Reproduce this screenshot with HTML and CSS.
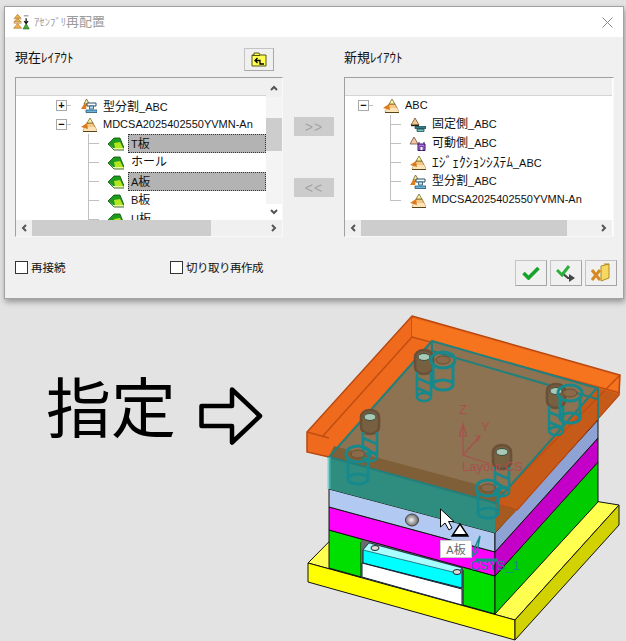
FILE: index.html
```html
<!DOCTYPE html>
<html lang="ja">
<head>
    <meta charset="UTF-8">
    <meta name="viewport" content="width=device-width, initial-scale=1.0">
    <title>アセンブリ再配置</title>
    <link rel="stylesheet" href="styles.css">
</head>
<body>
    <svg class="sprites" width="0" height="0">
        <symbol id="i-asm" viewBox="0 0 16 14">
            <path d="M6 5h6l4 8H2z" fill="#f8c880" stroke="#7a5a20" stroke-width=".7"/>
            <path d="M4 9h10l2 4H2z" fill="#fce4b8"/>
            <path d="M9 0 12 5H6z" fill="#f8f0a0" stroke="#6a5a20" stroke-width=".7"/>
            <path d="M0 9 6 5l1 6z" fill="#dd7a1a"/>
            <path d="M2 13.500h14" stroke="#5a4418"/>
        </symbol>
        <symbol id="i-part" viewBox="0 0 16 14">
            <path d="M0 7 6 1h6l4 10H5z" fill="#1e9a1e"/>
            <path d="M6 6l6-1 3 6H7z" fill="#b4e61e"/>
            <path d="M5 11h10l1 2H6z" fill="#f0f8a0"/>
            <path d="M0 7 6 1h6l4 10 .5 2H6z" fill="none" stroke="#0d4f0d" stroke-width=".8"/>
        </symbol>
        <symbol id="i-split" viewBox="0 0 16 14">
            <path d="M5.500 0 8.500 5H3z" fill="#f8ec98" stroke="#5a4a20" stroke-width=".7"/>
            <path d="M0 10 3 5h3l-1 5z" fill="#e07c1c"/>
            <path d="M6 4h9v3H6z" fill="#fff" stroke="#26506a"/>
            <path d="M8.500 7h4v3h-4z" fill="#bfe4f4" stroke="#26506a" stroke-width=".8"/>
            <path d="M5 11h11v2.500H5z" fill="#6ab8e0" stroke="#26506a" stroke-width=".8"/>
        </symbol>
        <symbol id="i-fixed" viewBox="0 0 16 14">
            <path d="M5 0 9 7H1z" fill="#f4c888" stroke="#5a3a20" stroke-width=".7"/>
            <path d="M1 7.500h8" stroke="#20201a" stroke-width="1.400"/>
            <path d="M5 8.500h11v2H5z" fill="#2f7f86" stroke="#123c40" stroke-width=".7"/>
            <path d="M7 11h7v2.500H7z" fill="#6ac2c8" stroke="#123c40" stroke-width=".7"/>
        </symbol>
        <symbol id="i-moving" viewBox="0 0 16 14">
            <path d="M4 0 8 7H0z" fill="#f4c8a8" stroke="#5a3a20" stroke-width=".7"/>
            <path d="M8 7h7v6.500H8z" fill="#b070e0" stroke="#34106a"/>
            <path d="M10 9.500h3v4h-3z" fill="#fff" stroke="#34106a" stroke-width=".7"/>
            <path d="M9 5v2M14 5v2" stroke="#34106a"/>
        </symbol>
    </svg>

    <section class="dialog">
        <header class="title-bar">
            <svg class="title-icon" width="17" height="16" viewBox="0 0 22 20">
                <path d="M6 0 10 5H2zM6 6l5 4H1z" fill="#f4b850" stroke="#a06a10" stroke-width=".8"/>
                <path d="M1 6h10M1 11.500h10" stroke="#c08030"/>
                <path d="M6 12l5 6H1z" fill="#f4b850" stroke="#a06a10" stroke-width=".8"/>
                <path d="M17 12 21 19H13z" fill="#4aa83a" stroke="#1c6a1c" stroke-width=".8"/>
                <path d="M17 5v7M14.500 9 17 12l2.500-3" fill="none" stroke="#111" stroke-width="1.600"/>
                <path d="M14 2h6" stroke="#888" stroke-width="1.400"/>
            </svg>
            <span class="title-text"><span class="title-kana">ｱｾﾝﾌﾞﾘ</span>再配置</span>
            <svg class="close-icon" width="11" height="11" viewBox="0 0 11 11">
                <path d="M.5.5l10 10M10.500.5l-10 10" stroke="#8a8a8a"/>
            </svg>
        </header>

        <div class="dialog-body">
            <div class="columns">
                <div class="column column-left">
                    <div class="column-head">
                        <span class="column-title">現在ﾚｲｱｳﾄ</span>
                        <button class="folder-btn" type="button">
                            <svg width="16" height="15" viewBox="0 0 16 15">
                                <path d="M3 1h5l1 2h6v11H1V3h2z" fill="#ffff50" stroke="#55551a"/>
                                <path d="M1 3.500h8" stroke="#55551a"/>
                                <path d="M6.500 6 4 8.500 6.500 11M4.500 8.500H9V12h4" fill="none" stroke="#000" stroke-width="1.300"/>
                            </svg>
                        </button>
                    </div>
                    <div class="panel">
                        <div class="panel-main">
                            <div class="panel-header"></div>
                            <div class="tree">
                                <div class="row row-top">
                                    <span class="expander">+</span><span class="stub"></span>
                                    <svg class="icon"><use href="#i-split"/></svg>
                                    <span class="label"><span class="cjk">型分割</span>_ABC</span>
                                </div>
                                <div class="row row-top">
                                    <span class="expander">−</span><span class="stub"></span>
                                    <svg class="icon"><use href="#i-asm"/></svg>
                                    <span class="label">MDCSA2025402550YVMN-An</span>
                                </div>
                                <div class="row row-child">
                                    <span class="branch"></span>
                                    <svg class="icon"><use href="#i-part"/></svg>
                                    <span class="label picked">T<span class="cjk">板</span></span>
                                </div>
                                <div class="row row-child">
                                    <span class="branch"></span>
                                    <svg class="icon"><use href="#i-part"/></svg>
                                    <span class="label"><span class="cjk">ホール</span></span>
                                </div>
                                <div class="row row-child">
                                    <span class="branch"></span>
                                    <svg class="icon"><use href="#i-part"/></svg>
                                    <span class="label picked">A<span class="cjk">板</span></span>
                                </div>
                                <div class="row row-child">
                                    <span class="branch"></span>
                                    <svg class="icon"><use href="#i-part"/></svg>
                                    <span class="label">B<span class="cjk">板</span></span>
                                </div>
                                <div class="row row-child">
                                    <span class="branch"></span>
                                    <svg class="icon"><use href="#i-part"/></svg>
                                    <span class="label">U<span class="cjk">板</span></span>
                                </div>
                            </div>
                        </div>
                        <div class="vscroll">
                            <span class="chevron">
                                <svg width="8" height="6" viewBox="0 0 8 6"><path d="M1 5l3-3 3 3" fill="none" stroke="#555" stroke-width="2"/></svg>
                            </span>
                            <div class="vtrack"><div class="vthumb"></div></div>
                            <span class="chevron">
                                <svg width="8" height="6" viewBox="0 0 8 6"><path d="M1 1l3 3 3-3" fill="none" stroke="#555" stroke-width="2"/></svg>
                            </span>
                        </div>
                        <div class="hscroll">
                            <span class="chevron">
                                <svg width="6" height="8" viewBox="0 0 6 8"><path d="M5 1 2 4l3 3" fill="none" stroke="#555" stroke-width="2"/></svg>
                            </span>
                            <div class="htrack"><div class="hthumb hthumb-left"></div></div>
                            <span class="chevron">
                                <svg width="6" height="8" viewBox="0 0 6 8"><path d="M1 1l3 3-3 3" fill="none" stroke="#555" stroke-width="2"/></svg>
                            </span>
                        </div>
                    </div>
                </div>

                <div class="mover">
                    <button class="move-btn" type="button">&gt;&gt;</button>
                    <button class="move-btn" type="button">&lt;&lt;</button>
                </div>

                <div class="column column-right">
                    <div class="column-head">
                        <span class="column-title">新規ﾚｲｱｳﾄ</span>
                    </div>
                    <div class="panel panel-wide">
                        <div class="panel-main">
                            <div class="panel-header"></div>
                            <div class="tree tree-right">
                                <div class="row row-top">
                                    <span class="expander">−</span><span class="stub"></span>
                                    <svg class="icon"><use href="#i-asm"/></svg>
                                    <span class="label">ABC</span>
                                </div>
                                <div class="row row-child">
                                    <span class="branch"></span>
                                    <svg class="icon"><use href="#i-fixed"/></svg>
                                    <span class="label"><span class="cjk">固定側</span>_ABC</span>
                                </div>
                                <div class="row row-child">
                                    <span class="branch"></span>
                                    <svg class="icon"><use href="#i-moving"/></svg>
                                    <span class="label"><span class="cjk">可動側</span>_ABC</span>
                                </div>
                                <div class="row row-child">
                                    <span class="branch"></span>
                                    <svg class="icon"><use href="#i-asm"/></svg>
                                    <span class="label"><span class="cjk kana">ｴｼﾞｪｸｼｮﾝｼｽﾃﾑ</span>_ABC</span>
                                </div>
                                <div class="row row-child">
                                    <span class="branch"></span>
                                    <svg class="icon"><use href="#i-split"/></svg>
                                    <span class="label"><span class="cjk">型分割</span>_ABC</span>
                                </div>
                                <div class="row row-child row-last">
                                    <span class="branch"></span>
                                    <svg class="icon"><use href="#i-asm"/></svg>
                                    <span class="label">MDCSA2025402550YVMN-An</span>
                                </div>
                            </div>
                        </div>
                        <div class="hscroll">
                            <span class="chevron">
                                <svg width="6" height="8" viewBox="0 0 6 8"><path d="M5 1 2 4l3 3" fill="none" stroke="#555" stroke-width="2"/></svg>
                            </span>
                            <div class="htrack"><div class="hthumb hthumb-right"></div></div>
                            <span class="chevron">
                                <svg width="6" height="8" viewBox="0 0 6 8"><path d="M1 1l3 3-3 3" fill="none" stroke="#555" stroke-width="2"/></svg>
                            </span>
                        </div>
                    </div>
                </div>
            </div>

            <div class="footer">
                <label class="check check-first"><span class="box"></span>再接続</label>
                <label class="check check-second"><span class="box"></span>切り取り再作成</label>
                <div class="actions">
                    <button class="action-btn" type="button">
                        <svg width="18" height="14" viewBox="0 0 18 14"><path d="M1.500 7 6.500 12 16.500 2" fill="none" stroke="#16a32a" stroke-width="3.600"/></svg>
                    </button>
                    <button class="action-btn" type="button">
                        <svg width="20" height="18" viewBox="0 0 20 18">
                            <path d="M6 9l6 5h2" fill="none" stroke="#444" stroke-width="2.200"/>
                            <path d="M13 10l6 4-6 4z" fill="#444"/>
                            <path d="M1 6l5 5 7-9" fill="none" stroke="#2cae3c" stroke-width="3"/>
                        </svg>
                    </button>
                    <button class="action-btn" type="button">
                        <svg width="20" height="20" viewBox="0 0 20 20">
                            <path d="M10 3 18 1v14l-8 3z" fill="#f6d860" stroke="#b08a20"/>
                            <path d="M13 1h5" stroke="#b08a20"/>
                            <path d="M1 7l8 10M9 7l-8 10" stroke="#d88a20" stroke-width="3"/>
                        </svg>
                    </button>
                </div>
            </div>
        </div>
    </section>

    <main class="scene">
        <h1 class="callout">指定</h1>
        <svg class="callout-arrow" width="64" height="58" viewBox="0 0 64 58">
            <path d="M2.500 19H33V2.500L61 29 33 55.500V39H2.500z" fill="none" stroke="#000" stroke-width="4.500" stroke-linejoin="round"/>
        </svg>

        <div class="model">
            <svg width="326" height="333" viewBox="300 308 326 333">
                <defs>
                    <radialGradient id="hole-shine" cx=".45" cy=".5" r=".6">
                        <stop offset="0" stop-color="#f4f4f4"/>
                        <stop offset="1" stop-color="#555"/>
                    </radialGradient>
                    <g id="bush" fill="none" stroke="#17898c" stroke-width="3">
                        <ellipse cx="0" cy="0" rx="12" ry="8"/>
                        <ellipse cx="0" cy="0" rx="7" ry="4" fill="#8a6a48" stroke="#6a5038" stroke-width="1"/>
                        <path d="M-10 4V24M10 4V24"/>
                        <ellipse cx="0" cy="25" rx="10" ry="5"/>
                    </g>
                    <g id="screw" fill="none" stroke="#17898c" stroke-width="2.600">
                        <path d="M-9-7a9 7 0 0 1 18 0v10a9 7 0 0 1-18 0z" fill="#77603f" stroke="#6a5038"/>
                        <ellipse cx="0" cy="-7" rx="6" ry="3.500" fill="#a8c8b8" stroke="#3d4d40" stroke-width="1"/>
                        <path d="M-7 8V32M7 8V32M-7 14 7 20M-7 24 7 30"/>
                        <ellipse cx="0" cy="33" rx="7" ry="4"/>
                    </g>
                </defs>

                <!-- base plate -->
                <path d="M308 563 400 470 619 505 515 620z" fill="#ffff50" stroke="#111"/>
                <path d="M308 563 515 620V640L308 582z" fill="#ffff00" stroke="#111"/>
                <path d="M515 620 619 505V525L515 640z" fill="#d2d200" stroke="#111"/>

                <!-- lower stack -->
                <path d="M329 530 495 576V614L463 605V570L361 542V577L329 568z" fill="#00e000" stroke="#111"/>
                <path d="M361 538 463 566V605L361 577z" fill="#6a6a6a"/>
                <path d="M363 550 369 543 462 568V588L363 563z" fill="#00ffff" stroke="#123"/>
                <path d="M369 543 462 568 457 573 363 550z" fill="#a8ffff" stroke="#123" stroke-width=".6"/>
                <path d="M362 563 462 589V605L362 577z" fill="#fff" stroke="#123"/>
                <ellipse cx="375" cy="548" rx="4" ry="2.500" fill="#ddd" stroke="#222"/>
                <ellipse cx="457" cy="572" rx="4" ry="2.500" fill="#ddd" stroke="#222"/>
                <path d="M495 576 598 462V502L495 614z" fill="#00cc00" stroke="#111"/>
                <path d="M329 507 495 552V576L329 530z" fill="#ff00ff" stroke="#111"/>
                <path d="M495 552 598 438V462L495 576z" fill="#c400c8" stroke="#111"/>
                <path d="M329 489 495 533V552L329 507z" fill="#b2caf2" stroke="#111"/>
                <path d="M495 533 598 420V438L495 552z" fill="#8ea2d4" stroke="#111"/>
                <ellipse cx="412" cy="520" rx="6.500" ry="6" fill="url(#hole-shine)" stroke="#444"/>

                <!-- orange plate -->
                <path d="M412 316 620 375 619 395 517 510 495 503 329 457 307 452 307 432z" fill="#ef6a1c" stroke="#b8480f" stroke-width="1.500"/>
                <path d="M412 316V337M412 337 620 393M412 337 322 437M307 432 329 438" fill="none" stroke="#c04e12" stroke-width="1.500"/>
                <path d="M412 318 618 376 618 391 412 336z" fill="#f7741e"/>
                <path d="M597 388 619 394 517 509 495 503z" fill="#c65a18"/>
                <path d="M510 486 620 375" stroke="#c04e12" stroke-width="1.500"/>

                <!-- translucent plate over it -->
                <path d="M432 341 597 388 495 503 329 457z" fill="#8d7352"/>
                <path d="M334 446 505 492 495 503 329 457z" fill="#7f5f38"/>
                <path d="M329 457 495 503V533L329 489z" fill="#2f8d80"/>
                <path d="M495 503 517 510 495 533z" fill="#a65a20"/>
                <path d="M432 341 597 388 495 503 329 457zM432 341V351L597 399M598 388V420" fill="none" stroke="#227f7c" stroke-width="2"/>
                <path d="M329 457V489" stroke="#55c4c0" stroke-width="3" opacity=".7"/>

                <use href="#screw" x="424" y="364"/>
                <use href="#bush" x="443" y="360"/>
                <use href="#screw" x="556" y="398"/>
                <use href="#bush" x="570" y="393"/>
                <use href="#screw" x="370" y="424"/>
                <use href="#bush" x="358" y="454"/>
                <use href="#screw" x="502" y="459"/>
                <use href="#bush" x="488" y="488"/>

                <!-- csys -->
                <g fill="none" stroke="#a8504c" stroke-width="1.200">
                    <path d="M463 455V424M459.500 436 463 424 466.500 436z"/>
                    <path d="M463 455 480 436M475 436 480 436 477 442"/>
                    <path d="M463 455 490 464"/>
                </g>
                <g class="csys-text">
                    <text x="459" y="414">Z</text>
                    <text x="481" y="431">Y</text>
                    <text x="462" y="471">Layout CS</text>
                </g>
                <text class="csys-teal" x="470" y="570">CSYS_1</text>
                <path d="M470 558 480 536 477 552z" fill="none" stroke="#17898c" stroke-width="1.500"/>
                <path d="M476 560h22" stroke="#17898c" stroke-width="3"/>

                <!-- pick cursor -->
                <path d="M440.500 509V527L445 523 449 530 452 528 448.500 521.500H454z" fill="#fff" stroke="#000"/>
                <path d="M460 524 468 536H452z" fill="#fff" stroke="#000" stroke-width="1.400"/>
                <path d="M453 535h15" stroke="#000" stroke-width="2"/>
            </svg>
            <div class="tooltip">A<span class="cjk">板</span></div>
        </div>
    </main>
</body>
</html>
```

FILE: styles.css
```css
* {
    box-sizing: border-box;
}
html, body {
    margin: 0;
    height: 641px;
    overflow: hidden;
}
body {
    background-color: #e3e3e3;
    font-family: "Liberation Sans", "Noto Sans CJK JP", sans-serif;
    font-size: 11px;
    color: #111;
    width: 626px;
}
.sprites {
    position: absolute;
}
.cjk {
    font-family: "Noto Sans CJK JP", sans-serif;
    font-size: 12px;
}
.kana {
    font-size: 13.500px;
}

/* dialog */
.dialog {
    margin: 6px 2px 0 4px;
    height: 293px;
    background-color: #f0f0f0;
    border: 1px solid #a2a2a2;
    box-shadow: 1px 3px 6px rgba(0, 0, 0, 0.35);
}
.title-bar {
    height: 30px;
    background-color: #fff;
    display: flex;
    align-items: center;
    padding: 0 10px 0 8px;
}
.title-icon {
    flex: none;
    margin-top: -1px;
}
.title-text {
    margin: -3px 0 0 4px;
    font-family: "Noto Sans CJK JP", sans-serif;
    font-size: 13px;
    color: #9b9b9b;
}
.title-kana {
    font-size: 10.700px;
}
.close-icon {
    margin-left: auto;
}
.dialog-body {
    padding: 0 6px 0 10px;
}
.columns {
    display: flex;
    height: 200px;
}
.column-left {
    width: 268px;
}
.column-right {
    width: 270px;
}
.column-head {
    height: 40px;
    display: flex;
    align-items: center;
    justify-content: space-between;
}
.column-head .column-title {
    margin-top: -1px;
    font-family: "Noto Sans CJK JP", sans-serif;
    font-size: 13px;
}
.folder-btn {
    width: 30px;
    height: 23px;
    margin: 4px 9px 0 0;
    padding: 0;
    background-color: #f0f0f0;
    border: 1px solid #c4c4c4;
    border-bottom-color: #a8a8a8;
    border-right-color: #a8a8a8;
    display: flex;
    align-items: center;
    justify-content: center;
}

/* list panels */
.panel {
    height: 160px;
    background-color: #fff;
    border: 1px solid #a0a0a0;
    border-right-color: #f8f8f8;
    border-bottom-color: #f8f8f8;
    display: grid;
    grid-template-columns: 250px 16px;
    grid-template-rows: 142px 16px;
}
.panel-wide {
    grid-template-columns: 267px;
}
.panel-main {
    overflow: hidden;
}
.panel-header {
    height: 18px;
    background-color: #f0f0f0;
    border-bottom: 1px solid #d4d4d4;
}
.row {
    height: 19px;
    display: flex;
    align-items: center;
    white-space: nowrap;
}
.row-top {
    padding-left: 40px;
}
.tree-right .row-top {
    padding-left: 13px;
}
.expander {
    width: 11px;
    height: 11px;
    border: 1px solid #a8a8a8;
    background-color: #fff;
    font-size: 11px;
    line-height: 9px;
    text-align: center;
    font-weight: bold;
    flex: none;
}
.stub {
    width: 4px;
    height: 1px;
    margin-right: 10px;
    background-color: #c0c0c0;
    flex: none;
}
.row-top .label {
    margin: -1px 0 0 6px;
}
.row-child {
    padding-left: 72px;
}
.tree-right .row-child {
    padding-left: 45px;
}
.branch {
    width: 20px;
    height: 19px;
    flex: none;
    border-left: 1px solid #c0c0c0;
    background: linear-gradient(#c0c0c0, #c0c0c0) left 9px / 10px 1px no-repeat;
}
.row-last .branch {
    height: 10px;
    margin-bottom: 9px;
}
.icon {
    width: 16px;
    height: 14px;
    flex: none;
}
.row-child .label {
    margin-left: 4px;
    padding-left: 3px;
    height: 19px;
    line-height: 16px;
    flex: 1;
}
.tree-right .row-child .label {
    padding-left: 2px;
}
.row-child .picked {
    background-color: #b3b3b3;
    border: 1px dotted #333;
    line-height: 15px;
    padding-left: 2px;
}
.vscroll {
    grid-row: 1;
    grid-column: 2;
    background-color: #fff;
    display: flex;
    flex-direction: column;
}
.chevron {
    flex: none;
    width: 16px;
    height: 16px;
    display: flex;
    align-items: center;
    justify-content: center;
}
.vscroll .chevron:first-child {
    background-color: #f0f0f0;
    height: 19px;
}
.vtrack {
    flex: 1;
    background-color: #f4f4f4;
    padding-top: 21px;
}
.vthumb {
    height: 33px;
    background-color: #cdcdcd;
}
.hscroll {
    grid-row: 2;
    grid-column: 1 / -1;
    background-color: #f0f0f0;
    display: flex;
}
.htrack {
    flex: 1;
}
.hthumb {
    height: 16px;
    background-color: #cdcdcd;
}
.hthumb-left {
    width: 179px;
}
.hthumb-right {
    width: 206px;
}

/* >> and << */
.mover {
    width: 61px;
    padding: 80px 0 0 11px;
    display: flex;
    flex-direction: column;
    gap: 42px;
}
.move-btn {
    width: 40px;
    height: 19px;
    padding: 0;
    background-color: #cccccc;
    border: none;
    color: #a4a4a4;
    font-family: "Liberation Sans", sans-serif;
    font-size: 14px;
    letter-spacing: 1px;
}

/* bottom row */
.footer {
    height: 52px;
    display: flex;
    align-items: flex-start;
    padding-top: 23px;
}
.check {
    display: flex;
    align-items: center;
    gap: 3px;
    font-family: "Noto Sans CJK JP", sans-serif;
    font-size: 11.500px;
    line-height: 14px;
}
.check-first {
    width: 155px;
}
.check-second {
    letter-spacing: -.500px;
}
.box {
    width: 13px;
    height: 13px;
    background-color: #fff;
    border: 1px solid #333;
}
.actions {
    margin-left: auto;
    display: flex;
    gap: 3px;
}
.action-btn {
    width: 32px;
    height: 26px;
    padding: 0;
    background-color: #f0f0f0;
    border: 1px solid #c4c4c4;
    border-right-color: #a4a4a4;
    border-bottom-color: #a4a4a4;
    display: flex;
    align-items: center;
    justify-content: center;
}

/* picture below the dialog */
.scene {
    display: flex;
    align-items: flex-start;
    padding: 9px 0 0 46px;
}
.callout {
    margin: 56px 0 0;
    width: 126px;
    flex: none;
    font-family: "Noto Sans CJK JP", sans-serif;
    font-size: 65px;
    font-weight: 400;
    line-height: 80px;
    white-space: nowrap;
    color: #000;
}
.callout-arrow {
    flex: none;
    margin: 79px 0 0 27px;
}
.model {
    flex: none;
    position: relative;
    margin-left: 37px;
    width: 326px;
    height: 333px;
}
.model svg {
    display: block;
}
.csys-text {
    font-family: "Liberation Sans", sans-serif;
    font-size: 13px;
    fill: #a8504c;
}
.csys-teal {
    font-family: "Liberation Sans", sans-serif;
    font-size: 13px;
    fill: #17898c;
}
.tooltip {
    position: absolute;
    left: 140px;
    top: 232px;
    width: 32px;
    height: 18px;
    background-color: #fff;
    border: 1px solid #c8c8c8;
    font-size: 11px;
    line-height: 16px;
    text-align: center;
    color: #6a6a6a;
}
```
